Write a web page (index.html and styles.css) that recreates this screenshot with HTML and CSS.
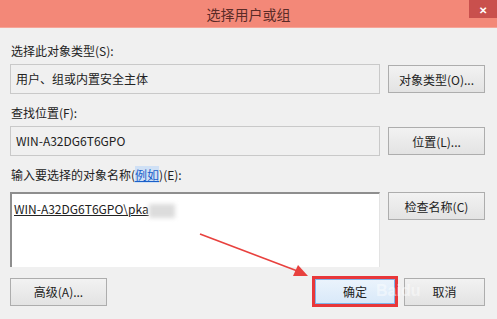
FILE: index.html
```html
<!DOCTYPE html>
<html lang="zh-CN">
  <head>
    <meta charset="UTF-8" />
    <meta name="viewport" content="width=device-width, initial-scale=1.0" />
    <title>选择用户或组</title>
    <link rel="stylesheet" href="styles.css">
  </head>
  <body>
    <div class="dialog">
      <div class="titlebar">
        <span class="title">选择用户或组</span>
        <span class="close">&#x2715;</span>
      </div>
      <div class="content">
        <div class="label">选择此对象类型(S):</div>
        <div class="row">
          <div class="field">用户、组或内置安全主体</div>
          <button class="btn">对象类型(O)...</button>
        </div>

        <div class="label">查找位置(F):</div>
        <div class="row">
          <div class="field">WIN-A32DG6T6GPO</div>
          <button class="btn">位置(L)...</button>
        </div>

        <div class="label spaced">输入要选择的对象名称(<a href="#" class="link">例如</a>)(E):</div>
        <div class="row top">
          <div class="textarea">
            <span class="name">WIN-A32DG6T6GPO\pka</span><span class="smudge"></span>
          </div>
          <button class="btn">检查名称(C)</button>
        </div>

        <div class="footer">
          <button class="btn">高级(A)...</button>
          <div class="actions">
            <div class="highlight">
              <button class="btn primary">确定</button>
            </div>
            <button class="btn cancel">取消</button>
          </div>
        </div>
      </div>

      <svg class="arrow" width="497" height="319" viewBox="0 0 497 319">
        <line x1="200" y1="234" x2="300" y2="272" stroke="#e8413e" stroke-width="1.6" />
        <polygon points="308,276 293,276 298,265" fill="#e8413e" />
      </svg>
      <div class="watermark">Baidu</div>
    </div>
  </body>
</html>
```

FILE: styles.css
```css
body {
  margin: 0;
  font-family: "Noto Sans CJK SC", "Liberation Sans", sans-serif;
  font-size: 12px;
  color: #222;
  background-color: #f0f0f0;
}

.dialog {
  position: relative;
  width: 497px;
  height: 319px;
  overflow: hidden;
  background-color: #f0f0f0;
}

.titlebar {
  height: 27px;
  background-color: #f38878;
  border-bottom: 1px solid #f6a598;
  display: flex;
  align-items: center;
  justify-content: center;
  position: relative;
}

.title {
  font-size: 14px;
  color: #5b2b27;
}

.close {
  position: absolute;
  top: 0;
  right: 0;
  width: 28px;
  height: 18px;
  background-color: #c9504d;
  color: #fff;
  font-size: 10px;
  font-weight: bold;
  display: flex;
  align-items: center;
  justify-content: center;
}

.content {
  padding: 13px 12px 0 10px;
}

.label {
  height: 19px;
  line-height: 19px;
  padding-left: 1px;
  margin-bottom: 4px;
}

.label.spaced {
  margin-bottom: 8px;
}

.link {
  color: #1a5fc8;
  text-decoration: underline;
  background-color: #cfe0f5;
}

.row {
  display: flex;
  align-items: center;
  gap: 8px;
  margin-bottom: 9px;
}

.row.top {
  align-items: flex-start;
}

.field {
  width: 370px;
  height: 30px;
  line-height: 27px;
  padding-left: 5px;
  border: 1px solid #c9c9c9;
  background-color: #f0f0f0;
  box-sizing: border-box;
}

.btn {
  font-family: inherit;
  font-size: 12px;
  color: #222;
  width: 97px;
  height: 28px;
  border: 1px solid #adadad;
  background: linear-gradient(#f2f2f2, #e3e3e3);
  padding: 0;
}

.textarea {
  width: 370px;
  height: 75px;
  box-sizing: border-box;
  background-color: #fff;
  border-top: 2px solid #8e8e8e;
  border-left: 2px solid #8e8e8e;
  border-right: 1px solid #e3e3e3;
  padding: 6px 2px;
  display: flex;
  align-items: flex-start;
}

.name {
  text-decoration: underline;
  color: #222;
}

.smudge {
  display: inline-block;
  width: 26px;
  height: 14px;
  margin-top: 4px;
  background-color: #dcdcdc;
  filter: blur(2px);
}

.footer {
  display: flex;
  justify-content: space-between;
  align-items: center;
  margin-top: 4px;
}

.actions {
  display: flex;
  align-items: center;
  gap: 6px;
}

.highlight {
  border: 3px solid #e8373a;
  display: flex;
}

.btn.primary {
  width: 80px;
  height: 25px;
  border-color: #7eb4ea;
  background: linear-gradient(#eaf3fc, #d9e9f9);
}

.btn.cancel {
  width: 81px;
}

.arrow {
  position: absolute;
  top: 0;
  left: 0;
  pointer-events: none;
}

.watermark {
  position: absolute;
  left: 376px;
  top: 282px;
  font-size: 16px;
  font-weight: bold;
  color: rgba(255, 255, 255, 0.45);
  font-family: "Liberation Sans", sans-serif;
  pointer-events: none;
}
```
